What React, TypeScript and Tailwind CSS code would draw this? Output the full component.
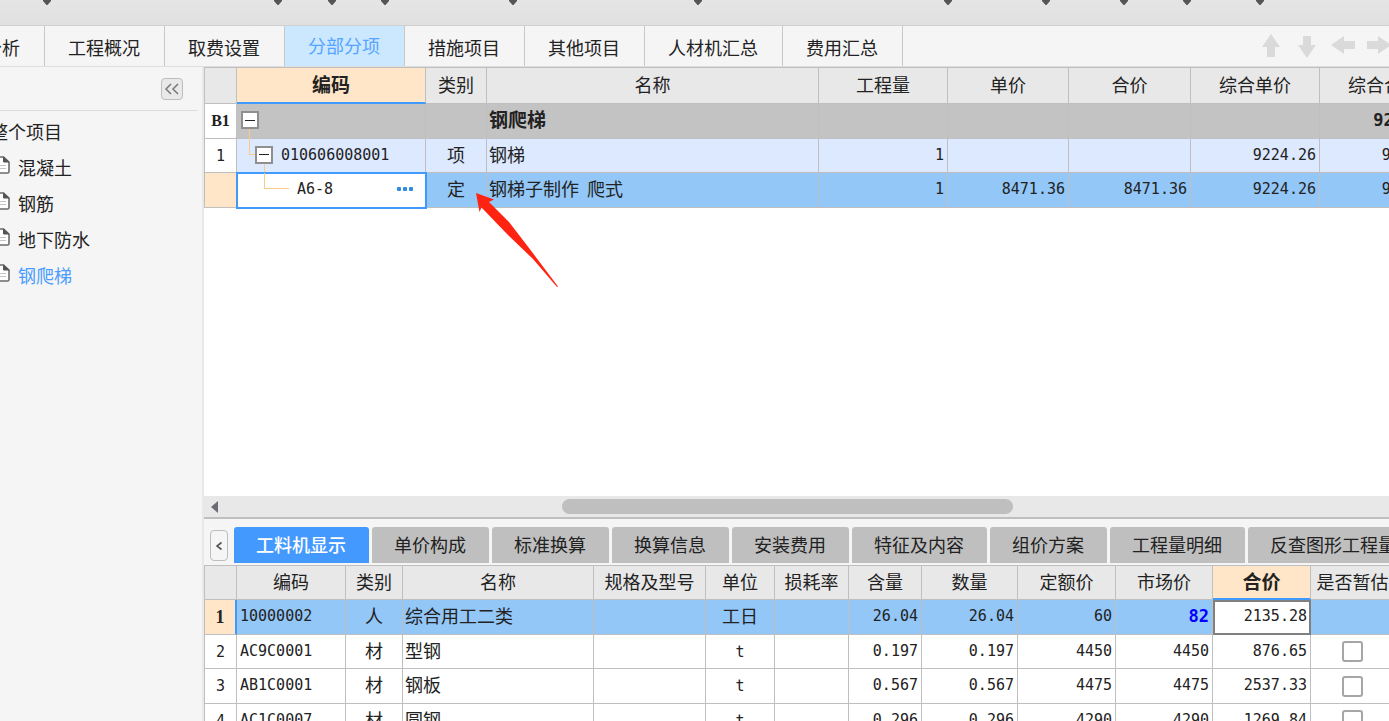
import type { ReactNode } from 'react'
import clsx from 'clsx'

// distance from one drop-down caret to the next
const toolbarSlots = [
  'w-[52px]',
  'w-[231px]',
  'w-[54px]',
  'w-[53px]',
  'w-[128px]',
  'w-[185px]',
  'w-[250px]',
  'w-[98px]',
  'w-[78px]',
  'w-[63px]',
  'w-[73px]',
]

const mainTabs = ['工程概况', '取费设置', '分部分项', '措施项目', '其他项目', '人材机汇总', '费用汇总']

const treeItems = ['混凝土', '钢筋', '地下防水', '钢爬梯']

const detailTabs = [
  '工料机显示',
  '单价构成',
  '标准换算',
  '换算信息',
  '安装费用',
  '特征及内容',
  '组价方案',
  '工程量明细',
  '反查图形工程量',
]

const billCols = [
  'w-[32px]',
  'w-[189px]',
  'w-[61px]',
  'w-[332px]',
  'w-[129px]',
  'w-[121px]',
  'w-[122px]',
  'w-[129px]',
  'w-[129px]',
]

const detailCols = [
  'w-[32px]',
  'w-[109px]',
  'w-[57px]',
  'w-[191px]',
  'w-[112px]',
  'w-[69px]',
  'w-[74px]',
  'w-[73px]',
  'w-[96px]',
  'w-[98px]',
  'w-[97px]',
  'w-[98px]',
  'w-[84px]',
]

const detailHeads = ['编码', '类别', '名称', '规格及型号', '单位', '损耗率', '含量', '数量', '定额价', '市场价', '合价', '是否暂估']

const resources = [
  { code: '10000002', kind: '人', name: '综合用工二类', unit: '工日', content: '26.04', qty: '26.04', quota: '60', market: '82', total: '2135.28' },
  { code: 'AC9C0001', kind: '材', name: '型钢', unit: 't', content: '0.197', qty: '0.197', quota: '4450', market: '4450', total: '876.65' },
  { code: 'AB1C0001', kind: '材', name: '钢板', unit: 't', content: '0.567', qty: '0.567', quota: '4475', market: '4475', total: '2537.33' },
  { code: 'AC1C0007', kind: '材', name: '圆钢', unit: 't', content: '0.296', qty: '0.296', quota: '4290', market: '4290', total: '1269.84' },
]

const mono = "font-['DejaVu_Sans_Mono',monospace] text-[15px]"
const monoBold = "font-['DejaVu_Sans_Mono',monospace] text-[17px] font-bold"

function Head({ children, active }: { children?: ReactNode; active?: boolean }) {
  return (
    <th
      className={clsx(
        'border-r border-[#bfbfbf] p-0 pb-[3px] text-center',
        active
          ? 'border-b-2 border-b-[#409afe] bg-[#ffe6c8] text-[19px] font-bold'
          : 'border-b bg-[#e8e8e8] font-normal',
      )}
    >
      {children}
    </th>
  )
}

function Cell({ children, className }: { children?: ReactNode; className?: string }) {
  return <td className={clsx('border-r border-b border-[#bfbfbf] py-0', className ?? 'px-0')}>{children}</td>
}

function Label({ children, className }: { children?: ReactNode; className?: string }) {
  return <td className={clsx('border-r border-b border-[#bfbfbf] p-0 pb-1', className)}>{children}</td>
}

function Num({ children, className }: { children?: ReactNode; className?: string }) {
  return (
    <td className={clsx('border-r border-b border-[#bfbfbf] p-0 pr-[3px] pb-[2px] text-right', className ?? mono)}>
      {children}
    </td>
  )
}

function Toggle({ label, className }: { label: string; className?: string }) {
  return (
    <button
      aria-label={label}
      className={clsx('relative flex size-[18px] items-center justify-center border-2 border-[#8f8f8f] bg-white', className)}
    >
      <span className="h-px w-[10px] bg-[#222]" />
    </button>
  )
}

function DocIcon() {
  return (
    <svg width="16" height="18" viewBox="0 0 16 18" fill="none" className="mb-1 shrink-0">
      <path d="M1 1h8.5L15 6v9.5a1.5 1.5 0 0 1-1.5 1.5H1z" fill="#fff" stroke="#6b6b6b" strokeWidth="1.6" />
      <path d="M9.5 1v5H15z" fill="#555" stroke="#555" />
      <path d="M3 9.5h9M3 12.5h9" stroke="#c4c4c4" />
    </svg>
  )
}

function MoveArrow({ label, d }: { label: string; d: string }) {
  return (
    <button aria-label={label} className="flex w-9 items-center justify-center">
      <svg width="24" height="24" viewBox="0 0 24 24" fill="#dadada">
        <path d={d} />
      </svg>
    </button>
  )
}

function BillTable() {
  return (
    <table className="w-full min-w-[1244px] table-fixed border-separate border-spacing-0 border-t border-l border-[#bfbfbf]">
      <colgroup>
        {billCols.map((w, i) => (
          <col key={i} className={w} />
        ))}
      </colgroup>
      <thead>
        <tr className="h-9">
          <Head />
          <Head active>编码</Head>
          <Head>类别</Head>
          <Head>名称</Head>
          <Head>工程量</Head>
          <Head>单价</Head>
          <Head>合价</Head>
          <Head>综合单价</Head>
          <Head>综合合价</Head>
        </tr>
      </thead>
      <tbody>
        <tr className="h-[35px] bg-[#c3c3c3]">
          <Cell className="bg-white px-0 text-center font-['Liberation_Serif',serif] text-base font-bold">B1</Cell>
          <Cell className="relative px-0 pb-[2px]">
            <span className="absolute top-6 -bottom-px left-3 w-px bg-[#fbc98a]" />
            <Toggle label="折叠 钢爬梯" className="ml-1" />
          </Cell>
          <Cell />
          <Label className="pl-[2px] text-[19px] font-bold">钢爬梯</Label>
          <Cell />
          <Cell />
          <Cell />
          <Cell />
          <Num className={monoBold}>9224.26</Num>
        </tr>
        <tr className="h-[34px] bg-[#dce9ff]">
          <Cell className={clsx('bg-white px-0 text-center', mono)}>1</Cell>
          <Cell className="relative px-0 pb-[2px]">
            <span className="absolute top-0 left-3 h-4 w-[6px] border-b border-l border-[#fbc98a]" />
            <span className="absolute top-6 -bottom-px left-[27px] w-px bg-[#fbc98a]" />
            <div className="flex items-center">
              <Toggle label="折叠 010606008001" className="ml-[18px]" />
              <span className={clsx('ml-2', mono)}>010606008001</span>
            </div>
          </Cell>
          <Label className="text-center">项</Label>
          <Label className="pl-[2px]">钢梯</Label>
          <Num>1</Num>
          <Num />
          <Num />
          <Num>9224.26</Num>
          <Num>9224.26</Num>
        </tr>
        <tr className="h-[35px] bg-[#92c7f7]">
          <Cell className="bg-[#ffe6c8] px-0" />
          <Cell className="relative bg-white px-0 pb-[2px] outline-2 -outline-offset-1 outline-[#409afe]">
            <span className="absolute top-0 left-[27px] h-4 w-[25px] border-b border-l border-[#fbc98a]" />
            <div className="flex items-center justify-between pr-3 pl-[60px]">
              <span className={mono}>A6-8</span>
              <button aria-label="更多">
                <svg width="16" height="4" viewBox="0 0 16 4" fill="#2f8be0">
                  <rect width="4" height="4" rx="1" />
                  <rect x="6" width="4" height="4" rx="1" />
                  <rect x="12" width="4" height="4" rx="1" />
                </svg>
              </button>
            </div>
          </Cell>
          <Label className="text-center">定</Label>
          <Label className="pl-[2px] whitespace-pre">钢梯子制作{'  '}爬式</Label>
          <Num>1</Num>
          <Num>8471.36</Num>
          <Num>8471.36</Num>
          <Num>9224.26</Num>
          <Num>9224.26</Num>
        </tr>
      </tbody>
    </table>
  )
}

function DetailTable() {
  return (
    <table className="w-full min-w-[1190px] table-fixed border-separate border-spacing-0 border-t border-l border-[#bfbfbf]">
      <colgroup>
        {detailCols.map((w, i) => (
          <col key={i} className={w} />
        ))}
      </colgroup>
      <thead>
        <tr className="h-[34px]">
          <Head />
          {detailHeads.map((h) => (
            <Head key={h} active={h === '合价'}>
              {h}
            </Head>
          ))}
        </tr>
      </thead>
      <tbody>
        {resources.map((r, i) => {
          const selected = i === 0
          return (
            <tr key={r.code} className={clsx(i % 2 ? 'h-[34px]' : 'h-[35px]', selected ? 'bg-[#92c7f7]' : 'bg-white')}>
              <Cell
                className={clsx(
                  'px-0 text-center',
                  selected
                    ? "border-r-2 border-r-[#409afe] bg-[#ffe6c8] font-['Liberation_Serif',serif] text-lg font-bold"
                    : mono,
                )}
              >
                {i + 1}
              </Cell>
              <Cell className={clsx('pr-0 pb-[2px] pl-[3px]', mono)}>{r.code}</Cell>
              <Label className="text-center">{r.kind}</Label>
              <Label className="pl-[2px]">{r.name}</Label>
              <Cell />
              {selected ? (
                <Label className="text-center">{r.unit}</Label>
              ) : (
                <Cell className={clsx('px-0 text-center', mono)}>{r.unit}</Cell>
              )}
              <Cell />
              <Num>{r.content}</Num>
              <Num>{r.qty}</Num>
              <Num>{r.quota}</Num>
              <Num className={selected ? clsx('text-[#0000ff]', monoBold) : undefined}>{r.market}</Num>
              <Num className={selected ? clsx('relative bg-white outline-2 -outline-offset-2 outline-[#808080]', mono) : undefined}>
                {r.total}
              </Num>
              <Cell>
                {!selected && (
                  <input
                    type="checkbox"
                    aria-label={`${r.name} 是否暂估`}
                    className="mx-auto block size-[21px] appearance-none rounded-[3px] border-2 border-[#a6a6a6] bg-white"
                  />
                )}
              </Cell>
            </tr>
          )
        })}
      </tbody>
    </table>
  )
}

export default function App() {
  return (
    <div className="relative flex h-screen flex-col overflow-hidden bg-[#f5f5f5] font-['Noto_Sans_CJK_SC',sans-serif] text-[18px] leading-6 text-[#222]">
      <header className="flex h-[26px] shrink-0 items-start border-b border-[#d0d0d0] bg-linear-to-b from-[#e5e5e5] to-[#e0e0e0]">
        {toolbarSlots.map((w, i) => (
          <button key={i} aria-label="展开" className={clsx('flex shrink-0 justify-end', w)}>
            <svg width="10" height="6" viewBox="0 0 10 6" fill="#555">
              <path d="M1 0h8v1L5.5 5h-1L1 1z" />
            </svg>
          </button>
        ))}
      </header>

      <nav className="flex h-[41px] shrink-0 border-b border-[#dedede]">
        <button className="flex w-[45px] shrink-0 items-center justify-end border-r border-[#c8c8c8] pt-px pr-6 whitespace-nowrap">
          造价分析
        </button>
        {mainTabs.map((tab) => (
          <button
            key={tab}
            className={clsx(
              'shrink-0 border-r border-[#c8c8c8] pr-[24px] pl-[23px]',
              tab === '分部分项' ? 'bg-[#cce8ff] pb-[2px] text-[#55a4ff]' : 'pt-px',
            )}
          >
            {tab}
          </button>
        ))}
        <div className="-mr-2 ml-auto flex">
          <MoveArrow label="上移" d="M12 0l9 13h-5v10H8V13H3z" />
          <MoveArrow label="下移" d="M8 2h8v9h5l-9 13L3 11h5z" />
          <MoveArrow label="左移" d="M0 11l13-9v5h11v8H13v5z" />
          <MoveArrow label="右移" d="M24 11L11 2v5H0v8h11v5z" />
        </div>
      </nav>

      <div className="flex min-h-0 flex-1">
        <aside className="w-[204px] shrink-0 overflow-hidden border-r-2 border-[#e9e9e9]">
          <div className="mr-1 flex h-11 items-center justify-end border-b border-[#dcdcdc] pr-[15px]">
            <button
              aria-label="收起"
              className="flex size-[22px] items-center justify-center rounded-[4px] border border-[#bdbdbd] bg-[#e9e9e9]"
            >
              <svg width="16" height="14" viewBox="0 0 16 14" fill="none" stroke="#777" strokeWidth="1.5">
                <path d="M7 2L2 7l5 5M14 2L9 7l5 5" />
              </svg>
            </button>
          </div>
          <ul className="pt-[2px]">
            <li>
              <button className="-ml-[10px] flex h-9 items-center whitespace-nowrap">整个项目</button>
            </li>
            {treeItems.map((item) => (
              <li key={item}>
                <button
                  className={clsx('-ml-[6px] flex h-9 items-center gap-2 whitespace-nowrap', item === '钢爬梯' && 'text-[#4a9dff]')}
                >
                  <DocIcon />
                  {item}
                </button>
              </li>
            ))}
          </ul>
        </aside>

        <main className="flex min-w-0 flex-1 flex-col">
          <section className="min-h-0 flex-1 overflow-hidden bg-white">
            <BillTable />
          </section>

          <div className="flex h-[23px] shrink-0 items-center border-b-2 border-[#bfbfbf] bg-[#e8e8e8] pl-[7px]">
            <button aria-label="向左滚动">
              <svg width="7" height="12" viewBox="0 0 7 12" fill="#6c6c76">
                <path d="M7 0v12L0 6z" />
              </svg>
            </button>
            <div className="flex flex-1">
              <div className="w-[29.4%]" />
              <div className="h-[15px] w-[38.5%] rounded-full bg-[#bfbfbf]" />
            </div>
          </div>

          <section className="h-[202px] shrink-0 overflow-hidden">
            <div className="flex h-[46px] gap-[3px] pt-2 pb-[2px] pl-[6px]">
              <button
                aria-label="上一个"
                className="mt-[3px] mr-[3px] flex h-[31px] w-[18px] shrink-0 items-center justify-center rounded-[4px] border border-[#bdbdbd]"
              >
                <svg width="8" height="10" viewBox="0 0 8 10" fill="none" stroke="#555" strokeWidth="1.6">
                  <path d="M6.5 1.5L2 5l4.5 3.5" />
                </svg>
              </button>
              {detailTabs.map((tab, i) => (
                <button
                  key={tab}
                  className={clsx(
                    'h-9 shrink-0 rounded-t-[3px] pr-[23px] pb-[2px] pl-[22px]',
                    i === 0 ? 'bg-[#4499ff] font-medium text-white' : 'bg-[#bfbfbf]',
                  )}
                >
                  {tab}
                </button>
              ))}
            </div>
            <DetailTable />
          </section>
        </main>
      </div>

      <svg className="pointer-events-none absolute top-[192px] left-[475px]" width="84" height="96" viewBox="0 0 84 96" fill="#ff2412">
        <path d="M1 1L19 7.500 14 10 34 30 54 56 83 94.500 82 95 58 67 33 43 6.500 15.500 4.500 20z" />
      </svg>
    </div>
  )
}
